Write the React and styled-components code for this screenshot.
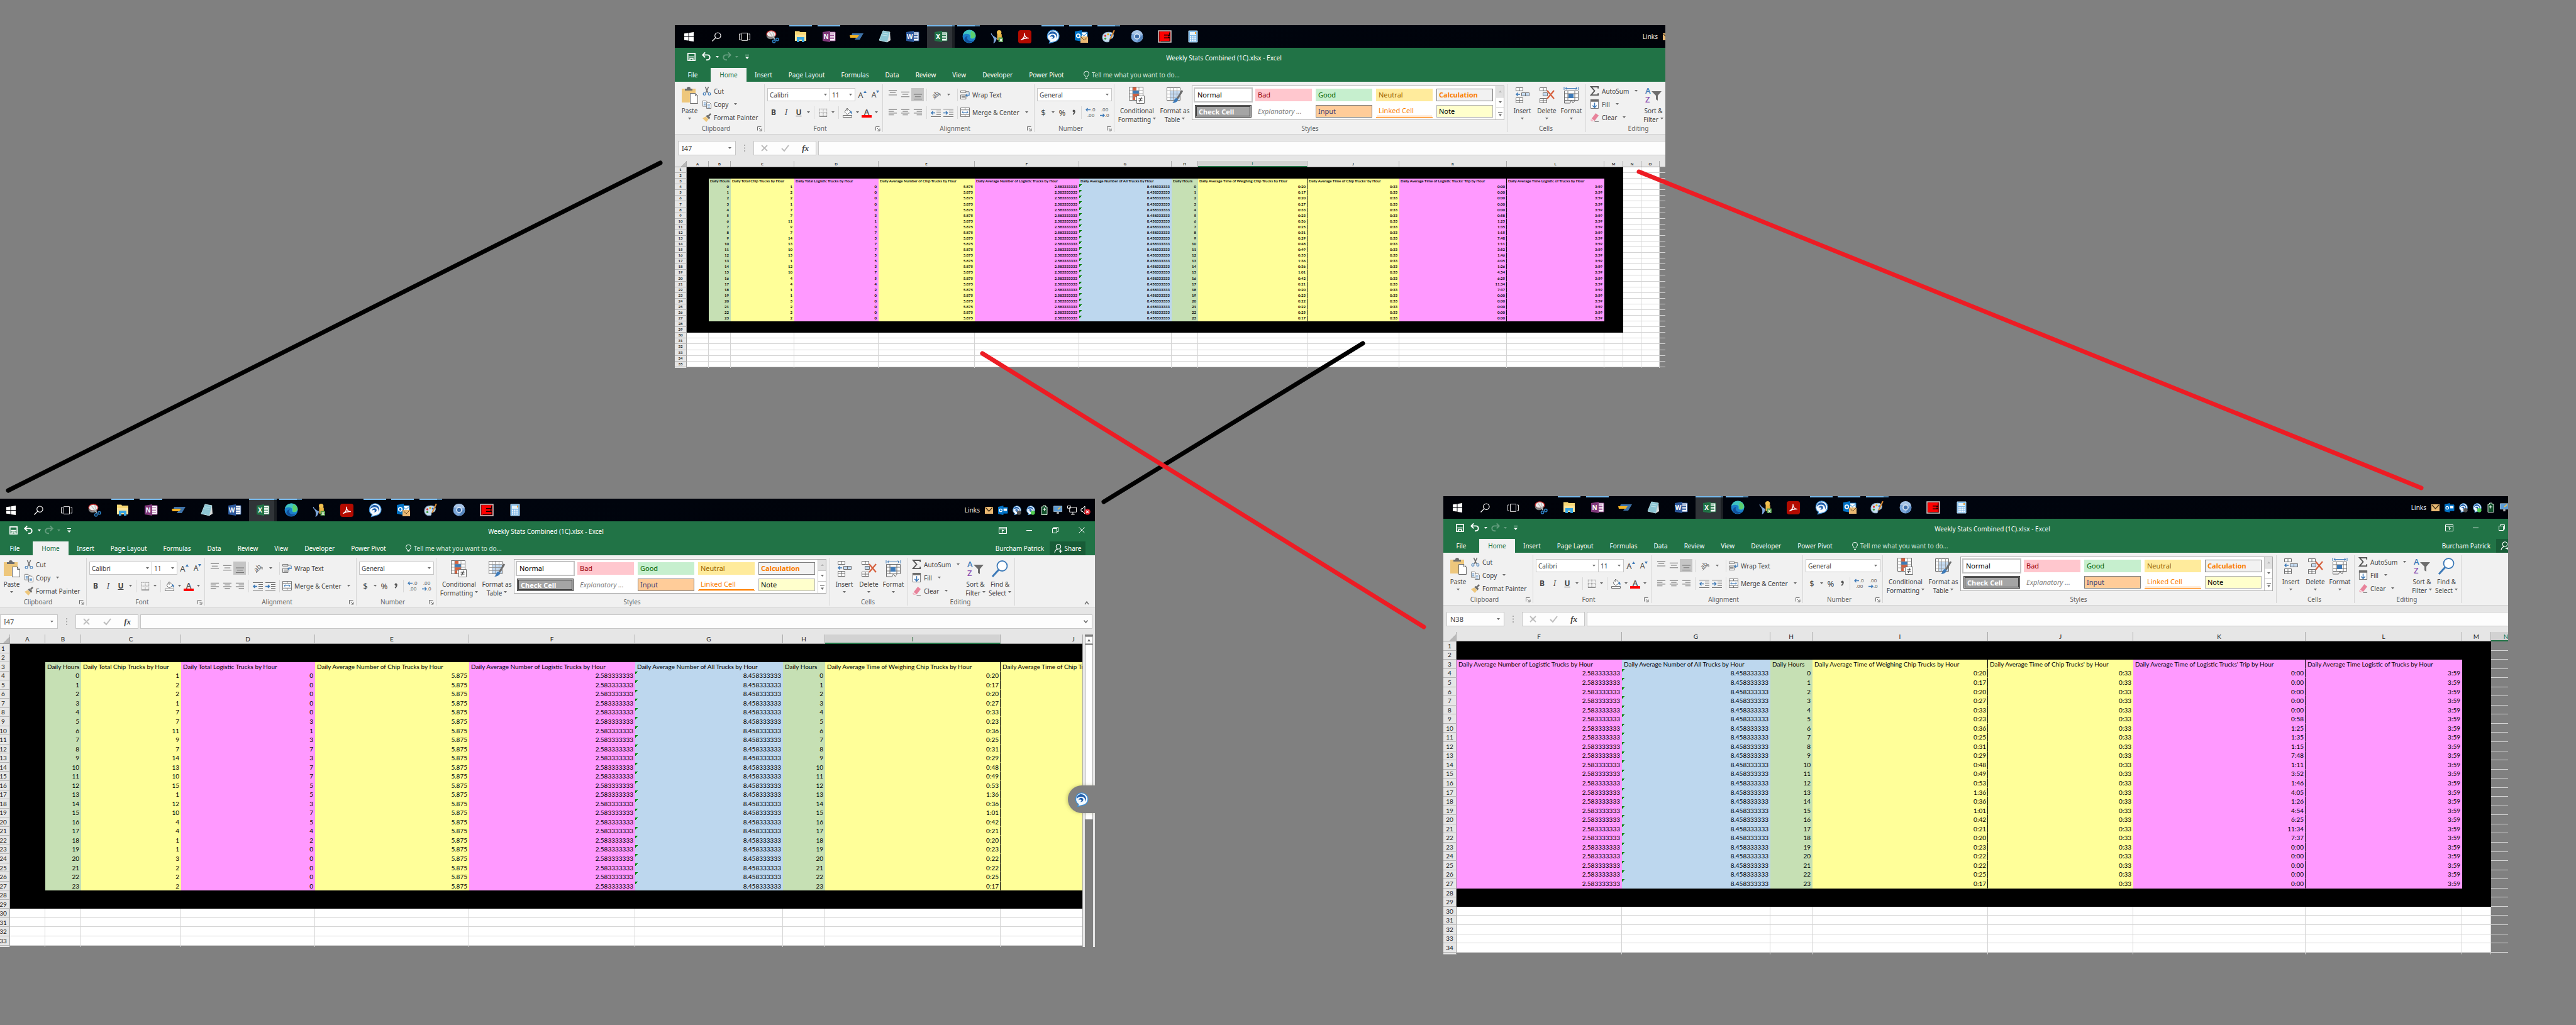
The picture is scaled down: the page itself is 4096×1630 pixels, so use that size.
import React from "react";
import styled, { createGlobalStyle, css } from "styled-components";

const GlobalStyle = createGlobalStyle`
  * { box-sizing: border-box; }
  body { margin: 0; background: #808080; }
  button, input, select {
    font: inherit; color: inherit; margin: 0; padding: 0;
    border: 0; background: none; border-radius: 0; appearance: none; outline: 0;
  }
  svg { display: block; flex: none; overflow: visible; }
`;

const ui = `"Noto Sans", "Open Sans", sans-serif`;
const sheet = `Lato, "Open Sans", sans-serif`;

/* ---------- desktop ---------- */

const Desktop = styled.main`
  position: relative;
  width: 100%;
  min-height: 100vh;
  overflow: hidden;
  background: #808080;
  font: 10px/14px ${ui};
  color: #444;
`;

const Connectors = styled.svg`
  position: absolute;
  top: 0;
  left: 0;
  width: 100%;
  height: auto;
  pointer-events: none;
`;

const Shot = styled.section`
  position: absolute;
  left: ${(p) => p.$x}px;
  top: ${(p) => p.$y}px;
  width: ${(p) => p.$w}px;
  height: ${(p) => p.$h}px;
  overflow: hidden;
`;

const Screen = styled.div`
  width: 1746px;
  margin-left: ${(p) => (p.$cut ? "-5px" : "0")};
  display: flex;
  flex-direction: column;
`;

/* ---------- task bar ---------- */

const TaskBar = styled.nav`
  height: 36px;
  display: flex;
  align-items: stretch;
  background: linear-gradient(90deg, #000208, #00050f 40%, #000208);
  color: #e8e8e8;
`;

const Apps = styled.div`
  width: 846px;
  display: grid;
  grid-template-columns: repeat(19, 1fr);
`;

const AppButton = styled.button`
  display: flex;
  align-items: center;
  justify-content: center;
  border-top: 2px solid transparent;
  padding-bottom: 2px;
  ${(p) =>
    p.$open &&
    css`
      border-image: linear-gradient(90deg, transparent 4px, #76b9ed 4px, #76b9ed 40px, transparent 40px) 2 0 0 0;
    `}
  ${(p) =>
    p.$stack &&
    css`
      border-image: linear-gradient(90deg, transparent 4px, #76b9ed 4px, #76b9ed 32px, #4f80a6 32px, #4f80a6 40px, transparent 40px) 2 0 0 0;
    `}
  ${(p) =>
    p.$active &&
    css`
      background: linear-gradient(90deg, #303438 40px, #1c2024 40px);
      border-image: linear-gradient(90deg, #76b9ed 40px, #4f80a6 40px) 2 0 0 0;
    `}
`;

const Tray = styled.div`
  margin-left: auto;
  padding-right: 4px;
  display: flex;
  align-items: center;
`;

const TrayLabel = styled.span`
  margin-right: 3px;
`;

const TrayIcon = styled.button`
  width: 22px;
  display: flex;
  justify-content: center;
`;

/* ---------- title bar and tabs ---------- */

const TitleBar = styled.header`
  height: 32px;
  display: grid;
  grid-template-columns: 1fr auto 1fr;
  align-items: center;
  background: #217346;
  color: #fff;
`;

const Quick = styled.div`
  display: flex;
  align-items: center;
  padding: 0 0 4px 18px;
`;

const QuickBtn = styled.button`
  width: ${(p) => p.$w}px;
  height: 18px;
  display: flex;
  align-items: center;
  justify-content: center;
  opacity: ${(p) => (p.$dim ? 0.3 : 1)};
`;

const WinBtns = styled.div`
  justify-self: end;
  display: flex;
  padding-bottom: 4px;
`;

const WinBtn = styled.button`
  width: 42px;
  height: 20px;
  display: flex;
  align-items: center;
  justify-content: center;
`;

const TabRow = styled.div`
  height: 22px;
  display: flex;
  background: #217346;
  color: #fff;
`;

const Tab = styled.button`
  padding: 0 13px;
  min-width: ${(p) => (p.$wide ? "57px" : "0")};
  ${(p) =>
    p.$on &&
    css`
      background: #f1f1f1;
      color: #217346;
    `}
`;

const TellMe = styled.label`
  display: flex;
  align-items: center;
  gap: 4px;
  margin-left: 18px;
  input { width: 160px; }
  input::placeholder { color: #d5e6dc; opacity: 1; }
`;

const Account = styled.div`
  margin-left: auto;
  padding-right: 15px;
  display: flex;
  align-items: center;
  gap: 9px;
`;

const Share = styled.button`
  height: 22px;
  width: 57px;
  display: flex;
  align-items: center;
  justify-content: center;
  gap: 3px;
  background: #185c37;
`;

/* ---------- ribbon ---------- */

const Ribbon = styled.div`
  height: 84px;
  padding: 4px 0 3px;
  display: flex;
  background: #f1f1f1;
  border-bottom: 1px solid #d2d2d2;
`;

const Group = styled.section`
  width: ${(p) => p.$w}px;
  display: flex;
  flex-direction: column;
  justify-content: space-between;
  border-right: 1px solid #d5d5d5;
`;

const GroupBody = styled.div`
  display: flex;
  padding: 0 3px 0 ${(p) => p.$lead}px;
`;

const GroupFoot = styled.footer`
  height: 11px;
  line-height: 11px;
  display: flex;
  align-items: center;
  color: #666;
  padding-right: 3px;
  span { flex: 1; text-align: center; }
`;

const Stack = styled.div`
  flex: 1;
  display: flex;
  flex-direction: column;
  gap: ${(p) => p.$gap || 0}px;
  padding-top: ${(p) => p.$top || 0}px;
`;

const Line = styled.div`
  height: 21px;
  display: flex;
  align-items: center;
`;

const Tool = styled.button`
  width: ${(p) => p.$w || 20}px;
  height: 21px;
  display: flex;
  align-items: center;
  justify-content: center;
  background: ${(p) => (p.$on ? "#c5c5c5" : "none")};
  font-size: ${(p) => (p.$big ? 13 : 12)}px;
  font-weight: ${(p) => (p.$bold ? 700 : 400)};
  font-style: ${(p) => (p.$italic ? "italic" : "normal")};
  text-decoration: ${(p) => (p.$under ? "underline" : "none")};
`;

const Command = styled.button`
  height: 21px;
  display: flex;
  align-items: center;
  gap: 4px;
  white-space: nowrap;
  svg:nth-of-type(2) { margin-left: 5px; }
`;

const BigTool = styled.button`
  width: ${(p) => p.$w}px;
  display: flex;
  flex-direction: column;
  align-items: center;
  padding-top: 4px;
  svg:first-child { margin-bottom: 4px; }
`;

const BigText = styled.span`
  height: 14px;
  display: flex;
  align-items: center;
  justify-content: center;
  gap: 3px;
  white-space: nowrap;
`;

const Rule = styled.i`
  width: 1px;
  height: 20px;
  margin: 0 4px;
  background: #d8d8d8;
`;

const Picker = styled.label`
  width: ${(p) => p.$w}px;
  height: 21px;
  display: flex;
  align-items: center;
  padding-right: 4px;
  background: #fff;
  border: 1px solid #c6c6c6;
  & + & { border-left: 0; }
  select { flex: 1; min-width: 0; padding-left: 3px; }
`;

const Caps = styled.span`
  display: flex;
  align-items: flex-start;
`;

const Gallery = styled.div`
  width: 497px;
  height: 55px;
  margin-top: 2px;
  display: flex;
  background: #fff;
  border: 1px solid #ababab;
`;

const Swatches = styled.div`
  flex: 1;
  display: grid;
  grid-template-columns: repeat(5, 1fr);
  grid-auto-rows: 20px;
  gap: 6px;
  padding: 4px 4px;
`;

const Swatch = styled.button`
  padding: 0 3px;
  text-align: left;
  white-space: nowrap;
  overflow: hidden;
  font-size: 11px;
  line-height: 16px;
  color: ${(p) => p.$fg || "#000"};
  background: ${(p) => p.$bg || "#fff"};
  font-weight: ${(p) => (p.$bold ? 700 : 400)};
  font-style: ${(p) => (p.$italic ? "italic" : "normal")};
  border: ${(p) => p.$line || "1px solid transparent"};
  border-bottom: ${(p) => p.$under};
  box-shadow: ${(p) => (p.$picked ? "0 0 0 2px #c5c5c5" : "none")};
`;

const GalleryBar = styled.div`
  width: 13px;
  display: grid;
  grid-template-rows: 1fr 1fr 1fr;
  border-left: 1px solid #c6c6c6;
  button {
    display: flex;
    align-items: center;
    justify-content: center;
    border-bottom: 1px solid #c6c6c6;
  }
  button:first-child { background: #e1e1e1; color: #b5b5b5; }
  button:last-child { border-bottom: 0; }
`;

const RibbonEnd = styled.div`
  flex: 1;
  display: flex;
  align-items: flex-end;
  justify-content: flex-end;
  padding-right: 8px;
`;

/* ---------- formula bar ---------- */

const FormulaBar = styled.div`
  height: 42px;
  padding: 10px 4px 9px 5px;
  display: flex;
  background: #e6e6e6;
`;

const Field = styled.label`
  width: ${(p) => (p.$w ? p.$w + "px" : "auto")};
  flex: ${(p) => (p.$w ? "none" : "1")};
  display: flex;
  align-items: center;
  padding: 0 6px 0 5px;
  background: #fdfdfd;
  border: 1px solid #c6c6c6;
  input { flex: 1; min-width: 0; font-size: 11px; }
`;

const Dots = styled.div`
  width: 28px;
  display: flex;
  align-items: center;
  justify-content: center;
`;

const FxBox = styled.div`
  width: 100px;
  margin-right: 3px;
  display: flex;
  background: #fdfdfd;
  border: 1px solid #c6c6c6;
  button {
    flex: 1;
    display: flex;
    align-items: center;
    justify-content: center;
    font: italic 700 13px/16px "Liberation Serif", serif;
  }
`;

/* ---------- work sheet ---------- */

const SheetArea = styled.div`
  display: flex;
`;

const SheetClip = styled.div`
  width: ${(p) => (p.$bar ? "1726px" : "100%")};
  overflow: hidden;
`;

const Table = styled.table`
  table-layout: fixed;
  width: 1px;
  border-collapse: separate;
  border-spacing: 0;
  color: #000;
  font-family: ${sheet};
  font-size: ${(p) => (p.$tiny ? 6 : 10)}px;
  line-height: ${(p) => (p.$tiny ? 8 : 12)}px;
  font-weight: ${(p) => (p.$tiny ? 700 : 400)};
  th { font-weight: inherit; }
`;

const HeadRow = styled.tr`
  height: ${(p) => (p.$tiny ? 10 : 15)}px;
`;

const Row = styled.tr`
  height: calc(${(p) => p.$total}px / ${(p) => p.$count});
`;

const SpillRow = styled.tr`
  height: 3px;
  line-height: 0;
`;

const ColHead = styled.th`
  padding: 0;
  background: ${(p) => (p.$on ? "#d2d2d2" : "#e6e6e6")};
  color: ${(p) => (p.$on ? "#217346" : "#222")};
  border-right: 1px solid #ababab;
  border-bottom: ${(p) => (p.$on ? "2px solid #217346" : "1px solid #9b9b9b")};
`;

const Corner = styled.th`
  padding: 0;
  background: linear-gradient(135deg, #e6e6e6 70%, #b8b8b8 70%);
  border-right: 1px solid #ababab;
  border-bottom: 1px solid #9b9b9b;
`;

const RowHead = styled.th`
  padding: 0;
  background: #e6e6e6;
  color: #222;
  text-align: center;
  border-right: 1px solid #9b9b9b;
  border-bottom: 1px solid #b4b4b4;
`;

const Cell = styled.td`
  padding: 0 2px 0 ${(p) => (p.$tiny ? 2 : 3)}px;
  overflow: hidden;
  white-space: nowrap;
  text-align: ${(p) => (p.$title ? "left" : "right")};
  background-color: ${(p) => p.$bg};
  border-right: 1px solid ${(p) => p.$right};
  border-bottom: 1px solid ${(p) => p.$bottom};
  ${(p) =>
    p.$flag &&
    css`
      background-image: linear-gradient(135deg, #008000 3px, transparent 3px);
    `}
`;

const ScrollBar = styled.div`
  width: 20px;
  display: flex;
  flex-direction: column;
  padding: 3px 3px 0 3px;
  border-left: 1px solid #ababab;
  background: linear-gradient(90deg, #e6e6e6 3px, transparent 3px, transparent 16px, #e6e6e6 16px);
  button {
    height: 12px;
    display: flex;
    align-items: center;
    justify-content: center;
    background: #fff;
    border: 1px solid #ababab;
  }
  div {
    height: 278px;
    margin-top: 1px;
    background: #fff;
    border: 1px solid #ababab;
    border-bottom: 0;
  }
`;

const CallBadge = styled.button`
  position: absolute;
  right: 0;
  top: 456px;
  width: 43px;
  height: 44px;
  padding-left: 10px;
  display: flex;
  align-items: center;
  background: #808080;
  border-radius: 22px 0 0 22px;
  box-shadow: -2px 0 5px rgba(120, 120, 60, 0.35);
`;

/* ---------- icons ---------- */

const Svg = ({ w = 16, h, box = "0 0 16 16", children }) => (
  <svg width={w} height={h || w} viewBox={box} fill="none" stroke="#6d6d6d" aria-hidden="true">
    {children}
  </svg>
);

const Caret = ({ c = "#6b6b6b" }) => (
  <Svg w={5} h={3} box="0 0 5 3"><path d="M0 0h5L2.500 3z" fill={c} stroke="none" /></Svg>
);

const Office = ({ letter, c, dark }) => (
  <Svg w={22} h={20} box="0 0 22 20">
    <path d="M11 3h10v14H11z" fill="#fff" stroke={c} />
    <path d="M13 6h6M13 8.500h6M13 11h6M13 13.500h6" stroke={c} />
    <path d="M1 3l12-2v18L1 17z" fill={dark} stroke="none" />
    <text x="6.500" y="14" textAnchor="middle" fontFamily="Open Sans" fontWeight="700" fontSize="10" fill="#fff" stroke="none">{letter}</text>
  </Svg>
);

const Swirl = ({ w = 21, dot }) => (
  <Svg w={w} box="0 0 20 20">
    <path d="M10 .8a8.600 8.600 0 0 1 1 17.200L5 19.500l1-3A8.600 8.600 0 0 1 10 .8z" fill="#f4faff" stroke="#3c8fd6" strokeWidth="1.200" />
    <path d="M3.500 9C4 3 9 1.500 13 3.500c3.500 2 4.500 6 2.500 9.500.3-4-1.500-7-5.500-7-3 0-5 1-6.500 3z" fill="#2160ad" stroke="none" />
    <path d="M6 11c.5-4 5.500-4.500 6.500-1.500.7 2.500-2 4.500-4.500 3.500 1.500 0 2.500-1 2-2S7.500 9.500 6 11z" fill="#2160ad" stroke="none" />
    {dot && <circle cx="15" cy="15" r="4.500" fill={dot} stroke="none" />}
  </Svg>
);

const apps = [
  ["Start", "", <Svg w={15}><path d="M0 2.500l7-1v6H0zM8 1.300L16 0v7.500H8zM0 8.500h7v6l-7-1zM8 8.500h8V16l-8-1.200z" fill="#fff" stroke="none" /></Svg>],
  ["Search", "", <Svg w={15}><circle cx="10" cy="6" r="5" stroke="#fff" strokeWidth="1.200" /><path d="M6.500 9.500L.5 15.500" stroke="#fff" strokeWidth="1.400" /></Svg>],
  ["Task View", "", <Svg w={18} h={13} box="0 0 20 14"><path d="M5 .5h10v13H5zM3 2H.6v10H3M17 2h2.400v10H17" stroke="#fff" /></Svg>],
  ["Snipping Tool", "", <Svg w={21} box="0 0 20 20"><ellipse cx="8" cy="6" rx="7" ry="5" fill="#eee" stroke="#c33" strokeWidth="1.300" /><path d="M1 8c1 6 9 7 12 1-3 2-9 3-12-1z" fill="#999" stroke="#777" /><path d="M5 3l8 11M10 2l3 12" stroke="#b9b9b9" strokeWidth="1.200" /><circle cx="12" cy="17" r="2" stroke="#2d7fc0" strokeWidth="1.500" /><circle cx="17" cy="14" r="2" stroke="#2d7fc0" strokeWidth="1.500" /></Svg>],
  ["File Explorer", "open", <Svg w={20} box="0 0 20 20"><path d="M1 3V1.500h7L9 3h10v14H1z" fill="#f8d775" stroke="none" /><path d="M1 7h18v10H1z" fill="#fde49b" stroke="none" /><path d="M4 19v-8h12v8h-4v-4H8v4z" fill="#3aa7e4" stroke="none" /></Svg>],
  ["OneNote", "open", <Office letter="N" c="#9b4f96" dark="#80397b" />],
  ["SAP Logon", "", <Svg w={22} h={12} box="0 0 22 12"><path d="M4 1h18l-6 10H8l3-4H2z" fill="#3f73a8" stroke="none" /><path d="M0 4h15l-3 4H1z" fill="#f5b324" stroke="none" /></Svg>],
  ["Notepad", "", <Svg w={20} box="0 0 20 20"><path d="M7 1l11 2-4 16L1 16z" fill="#8cc5d3" stroke="#b9dfe6" /><path d="M18 3l1 13-5 3z" fill="#d9dcdc" stroke="none" /><path d="M7 5l8 1M6 8l8 1" stroke="#bfe3ea" /></Svg>],
  ["Word", "", <Office letter="W" c="#2b579a" dark="#2b579a" />],
  ["Excel", "active", <Office letter="X" c="#217346" dark="#217346" />],
  ["Edge", "stack", <Svg w={22} box="0 0 20 20"><circle cx="10" cy="10" r="9.500" fill="#1b7fc9" stroke="none" /><path d="M1 8C3-2 18-2 19.500 8c.5 4-3 6-6.500 5-3-1-1-3-2-5S4 5 1 8z" fill="#3fc4c0" stroke="none" /><path d="M13 2c5 1 8 7 4 10-2 1-4 1-5 0 1-2 1-3 0-5z" fill="#5bd06e" stroke="none" /><path d="M8 9c-3 4 1 9 8 7-3 4-10 4-12 0-2-3 0-6 4-7z" fill="#12509b" stroke="none" /></Svg>],
  ["Directory", "", <Svg w={21} box="0 0 20 20"><path d="M10 6h7v9h-7z" fill="#e8b545" stroke="none" /><circle cx="13" cy="3.500" r="3.500" fill="#f1c04f" stroke="none" /><path d="M1 5c1 4 4 5 8 7-1 4-2 6-4 7 1-4 1-6-1-9z" fill="#7fa7dc" stroke="#7fa7dc" /><path d="M12 11h7v7h-7z" fill="#4f9b48" stroke="none" /><path d="M14 13l3.500 4M17.500 13L14 17" stroke="#fff" /></Svg>],
  ["Acrobat", "", <Svg w={21} box="0 0 20 20"><rect width="20" height="20" rx="3.500" fill="#b30b00" stroke="none" /><path d="M4 15c4-2 6-6 5.500-10.500C9.500 9 12 12 16 12c-4-.5-8 .5-12 3z" stroke="#fff" strokeWidth="1.300" /></Svg>],
  ["Jabber", "open", <Swirl w={22} />],
  ["Outlook", "open", <Svg w={22} box="0 0 22 20"><path d="M10 3h11v9H10z" fill="#fff" stroke="#0072c6" /><path d="M10 4l5.500 5L21 4" stroke="#0072c6" /><path d="M1 2l11-2v18L1 16z" fill="#0072c6" stroke="none" /><circle cx="6.500" cy="9" r="2.800" stroke="#fff" strokeWidth="1.800" /><path d="M10 10h12v10H10z" fill="#e9b872" stroke="none" /><path d="M10 10l6 6 6-6" stroke="#6e5026" /></Svg>],
  ["Paint", "stack", <Svg w={22} box="0 0 20 20"><path d="M9 4c6-1 9 3 7 7-1 3-4 1-5 3s1 4-3 4c-5 0-8-4-7-8s4-6 8-6z" fill="#c9dff0" stroke="#8fb1cc" /><circle cx="5" cy="9" r="1.500" fill="#d33" stroke="none" /><circle cx="9" cy="7" r="1.500" fill="#e8b21d" stroke="none" /><circle cx="5" cy="13" r="1.500" fill="#3a9b3a" stroke="none" /><circle cx="13" cy="8" r="1.500" fill="#2b6fd0" stroke="none" /><path d="M18 1l-6 13" stroke="#d68a35" strokeWidth="2" /></Svg>],
  ["Chromium", "", <Svg w={20} box="0 0 20 20"><circle cx="10" cy="10" r="9.500" fill="#7ba6d9" stroke="none" /><path d="M1 6a9.500 9.500 0 0 1 18 1h-9z" fill="#a7c4e6" stroke="none" /><path d="M19 8a9.500 9.500 0 0 1-9 11l4-7z" fill="#5585bd" stroke="none" /><circle cx="10" cy="10" r="4" fill="#3f6ea9" stroke="#e7f0fa" strokeWidth="1.500" /></Svg>],
  ["Extra", "", <Svg w={22} box="0 0 22 20"><path d="M1 1h20v18H1z" fill="#a00000" stroke="#c9c9c9" strokeWidth="1.500" /><path d="M5 4h14v5h-4v2h4v7H5z" fill="#100" stroke="none" /><path d="M3 2.500h15v4.500H10v1.500h6v3h-6V13h8.500v4H3z" fill="#f00" stroke="none" /></Svg>],
  ["Calculator", "", <Svg w={16} h={20} box="0 0 16 20"><path d="M1 1h14v18H1z" fill="#7db8e8" stroke="#b7dcf5" /><path d="M3 3h10v5H3z" fill="#e4f3fb" stroke="none" /><path d="M3 10.500h10M3 13.500h10M3 16.500h10" stroke="#fff" strokeWidth="2" strokeDasharray="2 .8" /><path d="M11 3h2v3h-2z" fill="#f2a33c" stroke="none" /></Svg>],
];

const tray = [
  ["Mail", <Svg w={13} h={11} box="0 0 13 11"><path d="M0 0h13v11H0z" fill="#e9b872" stroke="none" /><path d="M1 1l5.500 6L12 1" stroke="#3d2c12" strokeWidth="1.200" /></Svg>],
  ["Outlook", <Svg w={15} box="0 0 16 16"><path d="M8 3h8v10H8z" fill="#0072c6" stroke="#0072c6" /><path d="M9 5h6v4H9z" fill="#fff" stroke="none" /><path d="M0 2l9-2v16l-9-2z" fill="#0072c6" stroke="none" /><circle cx="4.500" cy="8" r="2.300" stroke="#fff" strokeWidth="1.400" /></Svg>],
  ["Headset", <Swirl w={15} dot="#555" />],
  ["Presence", <Swirl w={15} dot="#52d053" />],
  ["Battery", <Svg w={11} h={15} box="0 0 11 15"><path d="M3.500 0h4v2H10v12.500H1V2h2.500z" fill="#14522d" stroke="#d8eadd" /><path d="M5.500 3.500v5M3 6h5" stroke="#fff" /></Svg>],
  ["Display", <Svg w={14}><path d="M.5 1h15v10H.5z" fill="#5b9bd5" stroke="#a8c6de" /><path d="M6 11h4v4H6z" fill="#aaa" stroke="none" /><path d="M8 7l5-4" stroke="#f2c14e" strokeWidth="2" /></Svg>],
  ["Network", <Svg w={15}><path d="M4 3h11.500v8H4zM9.500 11v4M6.500 15h6M.5.500h5v4h-5z" stroke="#fff" /></Svg>],
  ["Volume", <Svg w={16}><path d="M1 6h2l4-4v12L3 10H1z" stroke="#fff" /><circle cx="11" cy="11" r="4.800" fill="#d9202b" stroke="none" /><path d="M9 9l4 4M13 9l-4 4" stroke="#fff" strokeWidth="1.300" /></Svg>],
];

const Launcher = () => (
  <Svg w={8} box="0 0 8 8"><path d="M.5 6.500v-6h6M3 3l3 3M7 3.500V7H3.500" /></Svg>
);

const Lines = ({ widths, align, y = 3, gap = 3 }) => (
  <Svg w={15}>
    {widths.map((w, i) => {
      const x = align === "end" ? 15 - w : align === "mid" ? 8 - w / 2 : 1;
      return <path key={i} d={`M${x} ${y + i * gap + 0.5}h${w}`} />;
    })}
  </Svg>
);

const Paste = () => (
  <Svg w={26} h={27} box="0 0 26 27">
    <path d="M0 3h22v22H0z" fill="#eec77c" stroke="none" />
    <path d="M5 6V3h3a3 3 0 0 1 6 0h3v3z" fill="#6d6d6d" stroke="none" />
    <path d="M13.500 10.500h8l4 4v12h-12z" fill="#fff" />
    <path d="M21.500 10.500v4h4" />
  </Svg>
);

const Scissors = () => (
  <Svg w={14}><path d="M5 0l5 11M11 0L6 11" strokeWidth="1.800" /><circle cx="3.500" cy="13" r="2.200" stroke="#3d7ab8" strokeWidth="1.300" /><circle cx="12.500" cy="13" r="2.200" stroke="#3d7ab8" strokeWidth="1.300" /></Svg>
);

const CopyIcon = () => (
  <Svg w={14}><path d="M.5 1.500h6l2 2v8h-8z" fill="#fff" /><path d="M2 5h4M2 7h4M2 9h4" stroke="#3d7ab8" /><path d="M7.500 4.500h5l3 3v8h-8z" fill="#fff" /><path d="M9 9h4.500M9 11h4.500M9 13h4.500" stroke="#3d7ab8" /></Svg>
);

const Painter = () => (
  <Svg w={14}><path d="M0 9l6-3 5 5-4 5z" fill="#eec77c" stroke="none" /><path d="M6 5l3-2 5 5-2 3z" fill="#6d6d6d" stroke="none" /><path d="M11 5l4-4" strokeWidth="3" /></Svg>
);

const CondIcon = () => (
  <Svg w={26} h={27} box="0 0 26 27">
    <path d="M.5.500h22v21H.5z" fill="#fff" />
    <path d="M6 1h6v5H6zM6 11h10v5H6zM6 16h4v5H6z" fill="#d65f3c" stroke="none" />
    <path d="M6 6h10v5H6z" fill="#3d7ab8" stroke="none" />
    <path d="M.5 6h22M.5 11h22M.5 16h22M6 .5v21M16 .5v21" stroke="#8c8c8c" strokeWidth=".8" />
    <path d="M12.500 14.500h12v12h-12z" fill="#fff" />
    <path d="M15.500 19h6M15.500 22h6M20 16.500l-3 8" stroke="#333" />
  </Svg>
);

const TableIcon = () => (
  <Svg w={26} h={27} box="0 0 26 27">
    <path d="M.5 1.500h21v20H.5z" fill="#fff" />
    <path d="M6 7h15v14H6z" fill="#c3d9f0" stroke="none" />
    <path d="M.5 6.500h21M.5 11.500h21M.5 16.500h21M5.500 1.500v20M10.500 1.500v20M16.500 1.500v20" stroke="#8c8c8c" strokeWidth=".8" />
    <path d="M25 6l-8 13" strokeWidth="3" />
    <path d="M15 18c3 0 4 3 2 5s-5 3-8 3c3-2 2-6 6-8z" fill="#3d7ab8" stroke="none" />
  </Svg>
);

const InsertIcon = () => (
  <Svg w={24} h={27} box="0 0 24 27"><path d="M1.500 1.500h11v5h-11zM7 1.500v5M1.500 17.500h11v8h-11zM7 17.500v8M1.500 21.500h11" fill="#fff" /><path d="M10.500 9.500h12v5h-12zM16.500 9.500v5" fill="#c3d9f0" /><path d="M8 12H2M4.500 9.500L2 12l2.500 2.500" stroke="#3d7ab8" strokeWidth="1.500" /></Svg>
);

const DeleteIcon = () => (
  <Svg w={26} h={27} box="0 0 26 27"><path d="M1.500 1.500h11v5h-11zM7 1.500v5M1.500 18.500h11v7h-11zM7 18.500v7M1.500 22h11" fill="#fff" /><path d="M6.500 9.500h7v5h-7z" fill="#c3d9f0" /><path d="M13 6l11 13M24 6L13 19" stroke="#d65f3c" strokeWidth="2.200" /></Svg>
);

const FormatIcon = () => (
  <Svg w={25} h={27} box="0 0 25 27"><path d="M1.500 6.500h22v15h-22zM7 6.500v15M18 6.500v15M1.500 11h22M1.500 17h22" fill="#fff" /><path d="M8 11h8v7H8z" fill="#3d7ab8" stroke="none" /><path d="M1.500 21.500V26h9l2-4.500 3 4.500 3-4.500" /><path d="M3 2.500h19M5.500.500L3 2.500l2.500 2M19.500.500l2.500 2-2.500 2M1 0v5M24 0v5" stroke="#3d7ab8" /></Svg>
);

const SortIcon = () => (
  <Svg w={26} h={27} box="0 0 26 27">
    <text x="0" y="11" fontFamily="Open Sans" fontSize="13" fontWeight="600" fill="#3d7ab8" stroke="none">A</text>
    <text x="0" y="25" fontFamily="Open Sans" fontSize="13" fontWeight="600" fill="#8b52b1" stroke="none">Z</text>
    <path d="M10 7h16l-6 7v8l-3-2v-6z" fill="#6d6d6d" stroke="none" />
  </Svg>
);

const FindIcon = () => (
  <Svg w={26} h={27} box="0 0 26 27"><circle cx="16.500" cy="9" r="8" fill="#fff" stroke="#3d7ab8" strokeWidth="1.800" /><path d="M11 15L1 26" stroke="#3d7ab8" strokeWidth="3" /></Svg>
);

const Decimals = ({ more }) => (
  <Svg w={18} h={17} box="0 0 18 17">
    <text x={more ? 9 : 3} y="7" fontFamily="Open Sans" fontSize="8" fill="#555" stroke="none">{more ? ".0" : ".00"}</text>
    <text x={more ? 3 : 9} y="16" fontFamily="Open Sans" fontSize="8" fill="#555" stroke="none">{more ? ".00" : ".0"}</text>
    <path d={more ? "M8 4.500H1M3.500 2L1 4.500 3.500 7" : "M1 13.500h7M5.500 11L8 13.500 5.500 16"} stroke="#3d7ab8" strokeWidth="1.300" />
  </Svg>
);

/* ---------- ribbon contents ---------- */

const RibbonGroup = ({ title, width, launch, lead = 3, children }) => (
  <Group $w={width} aria-label={title}>
    <GroupBody $lead={lead}>{children}</GroupBody>
    <GroupFoot>
      <span>{title}</span>
      {launch && <button aria-label={`${title} settings`}><Launcher /></button>}
    </GroupFoot>
  </Group>
);

const Large = ({ icon, one, two, width }) => (
  <BigTool $w={width}>
    {icon}
    <BigText>{one}</BigText>
    <BigText>{two}<Caret /></BigText>
  </BigTool>
);

const swatches = [
  { t: "Normal", $picked: true },
  { t: "Bad", $bg: "#ffc7ce", $fg: "#9c0006" },
  { t: "Good", $bg: "#c6efce", $fg: "#006100" },
  { t: "Neutral", $bg: "#ffeb9c", $fg: "#9c6500" },
  { t: "Calculation", $bg: "#f2f2f2", $fg: "#fa7d00", $bold: true, $line: "1px solid #7f7f7f" },
  { t: "Check Cell", $bg: "#a5a5a5", $fg: "#fff", $bold: true, $line: "3px double #3f3f3f" },
  { t: "Explanatory ...", $fg: "#7f7f7f", $italic: true },
  { t: "Input", $bg: "#ffcc99", $fg: "#3f3f76", $line: "1px solid #7f7f7f" },
  { t: "Linked Cell", $fg: "#fa7d00", $under: "3px double #ff8001" },
  { t: "Note", $bg: "#ffffcc", $line: "1px solid #b2b2b2" },
];

const RibbonBar = () => (
  <Ribbon>
    <RibbonGroup title="Clipboard" width={143} launch>
      <Large icon={<Paste />} one="Paste" width={41} />
      <Stack>
        <Command><Scissors />Cut</Command>
        <Command><CopyIcon />Copy<Caret /></Command>
        <Command><Painter />Format Painter</Command>
      </Stack>
    </RibbonGroup>

    <RibbonGroup title="Font" width={188} lead={4} launch>
      <Stack $top={6} $gap={7}>
        <Line>
          <Picker $w={100}><select aria-label="Font"><option>Calibri</option></select><Caret /></Picker>
          <Picker $w={40}><select aria-label="Font size"><option>11</option></select><Caret /></Picker>
          <Tool $w={22} $big aria-label="Increase font size"><Caps>A<Svg w={5} h={4} box="0 0 5 4"><path d="M0 4h5L2.500 0z" fill="#3d7ab8" stroke="none" /></Svg></Caps></Tool>
          <Tool aria-label="Decrease font size"><Caps>A<Svg w={5} h={4} box="0 0 5 4"><path d="M0 0h5L2.500 4z" fill="#3d7ab8" stroke="none" /></Svg></Caps></Tool>
        </Line>
        <Line>
          <Tool $bold>B</Tool>
          <Tool $italic>I</Tool>
          <Tool $under $bold>U</Tool>
          <Tool $w={10} aria-label="Underline options"><Caret /></Tool>
          <Rule />
          <Tool aria-label="Borders"><Svg w={14}><path d="M1.500 1v13M8 1v13M14.500 1v13M1 1.500h14M1 8h14" strokeDasharray="1 1" /><path d="M1 15h14" strokeWidth="1.500" /></Svg></Tool>
          <Tool $w={10} aria-label="Border options"><Caret /></Tool>
          <Rule />
          <Tool aria-label="Fill color"><Svg w={16}><path d="M7 1l6 6-6 4-4-4zM7 1v5" fill="#fff" /><path d="M12 5c3 1 3 4 2 6-1-2-1-3-3-3z" fill="#3d7ab8" stroke="none" /><path d="M.5 12.500h14v3H.5z" fill="#fff" /></Svg></Tool>
          <Tool $w={10} aria-label="Fill options"><Caret /></Tool>
          <Tool aria-label="Font color"><Svg w={16}><text x="8" y="12" textAnchor="middle" fontFamily="Open Sans" fontSize="13" fontWeight="600" fill="#555" stroke="none">A</text><path d="M0 12h16v4H0z" fill="#f00" stroke="none" /></Svg></Tool>
          <Tool $w={10} aria-label="Font color options"><Caret /></Tool>
        </Line>
      </Stack>
    </RibbonGroup>

    <RibbonGroup title="Alignment" width={241} lead={5} launch>
      <Stack $top={6} $gap={7}>
        <Line>
          <Tool aria-label="Top align"><Lines widths={[14, 10, 14]} align="mid" y={0} gap={4} /></Tool>
          <Tool aria-label="Middle align"><Lines widths={[14, 10, 14]} align="mid" y={3} gap={4} /></Tool>
          <Tool $on aria-label="Bottom align"><Lines widths={[14, 10, 14]} align="mid" y={7} gap={4} /></Tool>
          <Rule />
          <Tool aria-label="Orientation"><Svg w={16}><text x="2" y="11" fontFamily="Open Sans" fontSize="10" fill="#555" stroke="none" transform="rotate(-45 7 8)">ab</text><path d="M5 15l10-9M11.500 6H15v3.500" /></Svg></Tool>
          <Tool aria-label="Orientation options"><Caret /></Tool>
          <Rule />
          <Command><Svg w={15}><path d="M.5 1.500h9v3h-9zM.5 8.500h9v7h-9z" /><path d="M2 11h6M2 13h6M9 3h6" /><path d="M15 4v5H9M12 6.500L9.500 9l2.500 2.500" stroke="#3d7ab8" strokeWidth="1.300" /></Svg>Wrap Text</Command>
        </Line>
        <Line>
          <Tool aria-label="Align left"><Lines widths={[14, 9, 14, 9]} /></Tool>
          <Tool aria-label="Center"><Lines widths={[14, 9, 14, 9]} align="mid" /></Tool>
          <Tool aria-label="Align right"><Lines widths={[14, 9, 14, 9]} align="end" /></Tool>
          <Rule />
          <Tool aria-label="Decrease indent"><Svg w={16}><path d="M0 2.500h16M9 5.500h7M9 8.500h7M9 11.500h7M0 14.500h16" /><path d="M7 8.500H1M3.500 6L1 8.500 3.500 11" stroke="#3d7ab8" strokeWidth="1.600" /></Svg></Tool>
          <Tool aria-label="Increase indent"><Svg w={16}><path d="M0 2.500h16M9 5.500h7M9 8.500h7M9 11.500h7M0 14.500h16" /><path d="M0 8.500h6M4 6l2.500 2.500L4 11" stroke="#3d7ab8" strokeWidth="1.600" /></Svg></Tool>
          <Rule />
          <Command><Svg w={15}><path d="M.5.500h15v15H.5zM.5 4h15M.5 12h15M8 .5V4M8 12v3.500" fill="#fff" /><path d="M3 8h10M5 6L3 8l2 2M11 6l2 2-2 2" stroke="#3d7ab8" /></Svg>Merge &amp; Center<Caret /></Command>
        </Line>
      </Stack>
    </RibbonGroup>

    <RibbonGroup title="Number" width={127} lead={4} launch>
      <Stack $top={6} $gap={7}>
        <Line>
          <Picker $w={119}><select aria-label="Number format"><option>General</option></select><Caret /></Picker>
        </Line>
        <Line>
          <Tool $big>$</Tool>
          <Tool $w={10} aria-label="Currency options"><Caret /></Tool>
          <Tool $big>%</Tool>
          <Tool $w={16} aria-label="Comma style"><Svg w={5} h={9} box="0 0 5 9"><circle cx="2.500" cy="2.500" r="2" fill="#555" stroke="none" /><path d="M4 2.500C4 6 3 7 1 8" stroke="#555" strokeWidth="1.500" /></Svg></Tool>
          <Rule />
          <Tool $w={22} aria-label="Increase decimal"><Decimals more /></Tool>
          <Tool $w={22} aria-label="Decrease decimal"><Decimals /></Tool>
        </Line>
      </Stack>
    </RibbonGroup>

    <RibbonGroup title="Styles" width={626}>
      <Large icon={<CondIcon />} one="Conditional" two="Formatting" width={66} />
      <Large icon={<TableIcon />} one="Format as" two="Table" width={54} />
      <Gallery>
        <Swatches>
          {swatches.map(({ t, ...look }) => <Swatch key={t} {...look}>{t}</Swatch>)}
        </Swatches>
        <GalleryBar>
          <button aria-label="Styles up"><Svg w={5} h={3} box="0 0 5 3"><path d="M0 3h5L2.500 0z" fill="#b5b5b5" stroke="none" /></Svg></button>
          <button aria-label="Styles down"><Caret /></button>
          <button aria-label="More styles"><Svg w={7} h={7} box="0 0 7 7"><path d="M0 .5h7" /><path d="M1 3.500h5L3.500 7z" fill="#6b6b6b" stroke="none" /></Svg></button>
        </GalleryBar>
      </Gallery>
    </RibbonGroup>

    <RibbonGroup title="Cells" width={124}>
      <Large icon={<InsertIcon />} one="Insert" width={39} />
      <Large icon={<DeleteIcon />} one="Delete" width={39} />
      <Large icon={<FormatIcon />} one="Format" width={39} />
    </RibbonGroup>

    <RibbonGroup title="Editing" width={170} lead={6}>
      <Stack>
        <Command><Svg w={15}><path d="M14 4V1H2l6 7-6 7h12v-3" stroke="#555" strokeWidth="2" /></Svg>AutoSum<Caret /></Command>
        <Command><Svg w={15}><path d="M1.500.500h13v15h-13z" fill="#fff" /><path d="M1 0h14v4H1z" fill="#6d6d6d" stroke="none" /><path d="M8 5.500v8M4.500 10.500L8 14l3.500-3.500" stroke="#3d7ab8" strokeWidth="1.600" /></Svg>Fill<Caret /></Command>
        <Command><Svg w={15}><path d="M3 10l7-9 5 4-7 9z" fill="#e8839b" stroke="none" /><path d="M2 11l5 4H3l-2-2z" fill="#f3b6c3" stroke="none" /><path d="M8 15.500h7" /></Svg>Clear<Caret /></Command>
      </Stack>
      <Large icon={<SortIcon />} one="Sort &" two="Filter" width={38} />
      <Large icon={<FindIcon />} one="Find &" two="Select" width={40} />
    </RibbonGroup>

    <RibbonEnd>
      <button aria-label="Collapse ribbon"><Svg w={10} h={8} box="0 0 10 8"><path d="M2 6l3-4 3 4" strokeWidth="1.400" /></Svg></button>
    </RibbonEnd>
  </Ribbon>
);

/* ---------- sheet data ---------- */

const rep = (v) => Array(24).fill(v);
const hours = rep(0).map((_, i) => i);
const green = "#c6e0b4";
const yellow = "#ffff99";
const pink = "#ff99ff";
const blue = "#bdd7ee";

const columns = {
  B: { title: "Daily Hours", fill: green, data: hours },
  C: { title: "Daily Total Chip Trucks by Hour", fill: yellow, data: [1, 2, 2, 1, 7, 7, 11, 9, 7, 14, 13, 10, 15, 1, 12, 10, 4, 4, 1, 1, 3, 2, 2, 2] },
  D: { title: "Daily Total Logistic Trucks by Hour", fill: pink, data: [0, 0, 0, 0, 0, 3, 1, 3, 7, 3, 7, 7, 5, 5, 3, 7, 5, 4, 2, 0, 0, 0, 0, 0] },
  E: { title: "Daily Average Number of Chip Trucks by Hour", fill: yellow, data: rep("5.875") },
  F: { title: "Daily Average Number of Logistic Trucks by Hour", fill: pink, data: rep("2.583333333") },
  G: { title: "Daily Average Number of All Trucks by Hour", fill: blue, data: rep("8.458333333"), flag: true },
  H: { title: "Daily Hours", fill: green, data: hours },
  I: {
    title: "Daily Average Time of Weighing Chip Trucks by Hour", fill: yellow, edge: true,
    data: "0:20 0:17 0:20 0:27 0:33 0:23 0:36 0:25 0:31 0:29 0:48 0:49 0:53 1:36 0:36 1:01 0:42 0:21 0:20 0:23 0:22 0:22 0:25 0:17".split(" "),
  },
  J: { title: "Daily Average Time of Chip Trucks' by Hour", fill: yellow, data: rep("0:33") },
  K: {
    title: "Daily Average Time of Logistic Trucks' Trip by Hour", fill: pink, edge: true,
    data: "0:00 0:00 0:00 0:00 0:00 0:58 1:25 1:35 1:15 7:48 1:11 3:52 1:46 4:05 1:26 4:54 6:25 11:34 7:37 0:00 0:00 0:00 0:00 0:00".split(" "),
  },
  L: { title: "Daily Average Time Logistic of Trucks by Hour", fill: pink, data: rep("3:59") },
};

const gridline = "#d4d4d4";

const SheetCell = ({ name, row, tiny, empty }) => {
  const col = columns[name];
  if (col && row >= 3 && row <= 27) {
    return (
      <Cell
        $tiny={tiny}
        $title={row === 3}
        $bg={col.fill}
        $right={col.edge ? "#000" : col.fill}
        $bottom={col.fill}
        $flag={col.flag && row > 3}
      >
        {row === 3 ? col.title : col.data[row - 4]}
      </Cell>
    );
  }
  if (name <= "M" && row <= 29) return <Cell $bg="#000" $right="#000" $bottom="#000" />;
  if (name >= empty) return <Cell $bg="transparent" $right="transparent" $bottom={gridline} />;
  return <Cell $bg="#fff" $right={gridline} $bottom={gridline} />;
};

const Sheet = ({ cols, rows, total, active, tiny, empty = "Z" }) => (
  <Table $tiny={tiny}>
    <colgroup>
      {cols.map(([name, width]) => <col key={name} width={width} />)}
    </colgroup>
    <thead>
      <HeadRow $tiny={tiny}>
        <Corner />
        {cols.slice(1).map(([name]) => (
          <ColHead key={name} scope="col" $on={name === active}>{name}</ColHead>
        ))}
      </HeadRow>
    </thead>
    <tbody>
      {Array.from({ length: rows }, (_, i) => i + 1).map((row) => (
        <Row key={row} $total={total} $count={rows}>
          <RowHead scope="row">{row}</RowHead>
          {cols.slice(1).map(([name]) => (
            <SheetCell key={name} name={name} row={row} tiny={tiny} empty={empty} />
          ))}
        </Row>
      ))}
      <SpillRow>
        <RowHead />
        {cols.slice(1).map(([name]) => (
          <Cell key={name} $bg="transparent" $right={gridline} $bottom="transparent" />
        ))}
      </SpillRow>
    </tbody>
  </Table>
);

/* ---------- one captured Excel screen ---------- */

const tabs = ["File", "Home", "Insert", "Page Layout", "Formulas", "Data", "Review", "View", "Developer", "Power Pivot"];

const ExcelScreen = ({ x, y, w, h, cut, bar, account, nameBox, ...grid }) => (
  <Shot $x={x} $y={y} $w={w} $h={h}>
    <Screen $cut={cut}>
      <TaskBar>
        <Apps>
          {apps.map(([label, state, icon]) => (
            <AppButton key={label} aria-label={label} $open={state === "open"} $stack={state === "stack"} $active={state === "active"}>
              {icon}
            </AppButton>
          ))}
        </Apps>
        <Tray>
          <TrayLabel>Links</TrayLabel>
          {tray.map(([label, icon]) => <TrayIcon key={label} aria-label={label}>{icon}</TrayIcon>)}
        </Tray>
      </TaskBar>

      <TitleBar>
        <Quick>
          <QuickBtn $w={17} aria-label="Save"><Svg w={13}><path d="M1 1h14v14H1zM3 8h10M5 15v-4h6v4" stroke="#fff" strokeWidth="2" /></Svg></QuickBtn>
          <QuickBtn $w={30} aria-label="Undo"><Svg w={14}><path d="M2 5h8a4 4 0 0 1 0 9H8M6 .5L1.500 5 6 9.500" stroke="#fff" strokeWidth="2.200" /></Svg></QuickBtn>
          <QuickBtn $w={5} aria-label="Undo list"><Caret c="#fff" /></QuickBtn>
          <QuickBtn $w={26} $dim aria-label="Redo"><Svg w={14}><path d="M14 5H6a4 4 0 0 0 0 9h2M10 .5L14.500 5 10 9.500" stroke="#fff" strokeWidth="2.200" /></Svg></QuickBtn>
          <QuickBtn $w={5} $dim aria-label="Redo list"><Caret c="#fff" /></QuickBtn>
          <QuickBtn $w={28} aria-label="Customize toolbar"><Svg w={6} h={7} box="0 0 6 7"><path d="M0 .5h6" stroke="#fff" /><path d="M0 3.500h6L3 7z" fill="#fff" stroke="none" /></Svg></QuickBtn>
        </Quick>
        <span>Weekly Stats Combined (1C).xlsx - Excel</span>
        <WinBtns>
          <WinBtn aria-label="Ribbon options"><Svg w={13} h={11} box="0 0 13 11"><path d="M.5.500h12v10H.5zM.5 3h12M6.500 9V5M4.500 6.500l2-2 2 2" stroke="#fff" /></Svg></WinBtn>
          <WinBtn aria-label="Minimize"><Svg w={9} h={1} box="0 0 9 1"><path d="M0 .5h9" stroke="#fff" /></Svg></WinBtn>
          <WinBtn aria-label="Restore"><Svg w={10} box="0 0 10 10"><path d="M.5 2.500h7v7h-7zM2.500 2.500v-2h7v7h-2" stroke="#fff" /></Svg></WinBtn>
          <WinBtn aria-label="Close"><Svg w={10} box="0 0 10 10"><path d="M.5.500l9 9M9.500.500l-9 9" stroke="#fff" /></Svg></WinBtn>
        </WinBtns>
      </TitleBar>

      <TabRow>
        {tabs.map((t) => <Tab key={t} $on={t === "Home"} $wide={t === "File" || t === "Home"}>{t}</Tab>)}
        <TellMe>
          <Svg w={9} h={13} box="0 0 9 13"><path d="M3 9.500C3 7 .5 7 .5 4.300a4 4 0 0 1 8 0C8.500 7 6 7 6 9.500zM3 11.500h3" stroke="#fff" /></Svg>
          <input type="text" aria-label="Tell me" placeholder="Tell me what you want to do..." />
        </TellMe>
        {account && (
          <Account>
            <span>{account}</span>
            <Share><Svg w={14}><circle cx="8" cy="5" r="4.200" stroke="#fff" strokeWidth="1.300" /><path d="M1 15.500c1-4 3-6 6-6M9 13h6M12 10v6" stroke="#fff" strokeWidth="1.300" /></Svg>Share</Share>
          </Account>
        )}
      </TabRow>

      <RibbonBar />

      <FormulaBar>
        <Field $w={92}><input type="text" aria-label="Name box" defaultValue={nameBox} /><Caret /></Field>
        <Dots><Svg w={2} h={11} box="0 0 2 11"><path d="M1 0v11" strokeWidth="2" stroke="#ababab" strokeDasharray="2 2.500" /></Svg></Dots>
        <FxBox>
          <button aria-label="Cancel"><Svg w={11} box="0 0 11 11"><path d="M1 1l9 9M10 1l-9 9" stroke="#bdbdbd" strokeWidth="1.800" /></Svg></button>
          <button aria-label="Enter"><Svg w={13} h={11} box="0 0 13 11"><path d="M1 6l4 4 7-9" stroke="#bdbdbd" strokeWidth="2" /></Svg></button>
          <button aria-label="Insert function">fx</button>
        </FxBox>
        <Field><input type="text" aria-label="Formula" /><Svg w={7} h={5} box="0 0 7 5"><path d="M.5.500l3 3.500 3-3.500" strokeWidth="1.500" /></Svg></Field>
      </FormulaBar>

      <SheetArea>
        <SheetClip $bar={bar}><Sheet {...grid} /></SheetClip>
        {bar && (
          <ScrollBar>
            <button aria-label="Scroll up"><Svg w={5} h={4} box="0 0 5 4"><path d="M0 4h5L2.500 0z" fill="#6b6b6b" stroke="none" /></Svg></button>
            <div />
          </ScrollBar>
        )}
      </SheetArea>
    </Screen>
    {bar && <CallBadge aria-label="Jabber"><Swirl w={23} /></CallBadge>}
  </Shot>
);

export default function App() {
  return (
    <Desktop>
      <GlobalStyle />
      <ExcelScreen
        x={1073} y={40} w={1575} h={545} nameBox="I47" active="I" tiny empty="P" rows={35} total={318}
        cols={[["#", 19], ["A", 35], ["B", 35], ["C", 101], ["D", 134], ["E", 153], ["F", 166], ["G", 147], ["H", 42], ["I", 174], ["J", 146], ["K", 171], ["L", 155], ["M", 30], ["N", 29], ["O", 29], ["P", 29]]}
      />
      <ExcelScreen
        x={0} y={793} w={1741} h={713} nameBox="I47" account="Burcham Patrick" active="I" cut bar rows={33} total={480}
        cols={[["#", 21], ["A", 56], ["B", 57], ["C", 159], ["D", 213], ["E", 245], ["F", 264], ["G", 235], ["H", 67], ["I", 279], ["J", 232]]}
      />
      <ExcelScreen
        x={2295} y={789} w={1693} h={730} nameBox="N38" account="Burcham Patrick" active="N" empty="N" rows={34} total={495}
        cols={[["#", 21], ["F", 263], ["G", 236], ["H", 67], ["I", 279], ["J", 231], ["K", 274], ["L", 249], ["M", 46], ["N", 48]]}
      />
      <Connectors viewBox="0 0 4096 1630" fill="none" strokeWidth="7" strokeLinecap="round" aria-hidden="true">
        <path d="M1050 259L13 780M2167 546L1755 798" stroke="#000" />
        <path d="M2606 273L3850 776M1562 562L2264 997" stroke="#ed1c24" />
      </Connectors>
    </Desktop>
  );
}
